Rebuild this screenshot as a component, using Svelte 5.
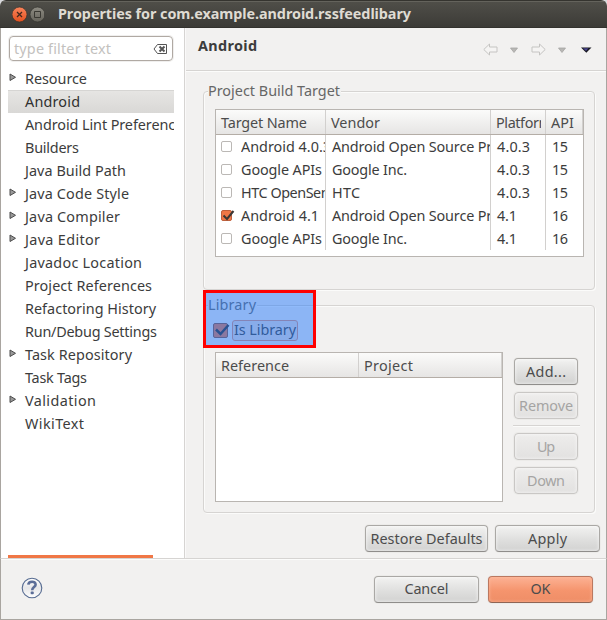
<script>
  const tree = [
    { label: 'Resource', width: 62, branch: true },
    { label: 'Android', width: 55, selected: true },
    { label: 'Android Lint Preferences', width: 165 },
    { label: 'Builders', width: 54 },
    { label: 'Java Build Path', width: 101 },
    { label: 'Java Code Style', width: 104, branch: true },
    { label: 'Java Compiler', width: 95, branch: true },
    { label: 'Java Editor', width: 75, branch: true },
    { label: 'Javadoc Location', width: 117 },
    { label: 'Project References', width: 127 },
    { label: 'Refactoring History', width: 131 },
    { label: 'Run/Debug Settings', width: 132 },
    { label: 'Task Repository', width: 107, branch: true },
    { label: 'Task Tags', width: 62 },
    { label: 'Validation', width: 71, branch: true },
    { label: 'WikiText', width: 59 }
  ];

  const google = ['Google APIs', 81, 'Google Inc.', 75];
  const aosp = ['Android Open Source Project', 192];
  const targets = [
    { name: 'Android 4.0.3', nw: 90, vendor: aosp[0], vw: aosp[1], platform: '4.0.3', pw: 33, api: '15' },
    { name: google[0], nw: google[1], vendor: google[2], vw: google[3], platform: '4.0.3', pw: 33, api: '15' },
    { name: 'HTC OpenSense SDK', nw: 132, vendor: 'HTC', vw: 28, platform: '4.0.3', pw: 33, api: '15' },
    { name: 'Android 4.1', nw: 78, vendor: aosp[0], vw: aosp[1], platform: '4.1', pw: 20, api: '16', checked: true },
    { name: google[0], nw: google[1], vendor: google[2], vw: google[3], platform: '4.1', pw: 20, api: '16' }
  ];

  // Tracks a label out or in so that it fills the given width.
  function fit(node, width) {
    const natural = node.getBoundingClientRect().width;
    const gaps = node.textContent.length - 1;
    node.style.letterSpacing = `${(width - natural) / gaps}px`;
    node.style.marginRight = `${-(width - natural) / gaps}px`;
  }
</script>

{#snippet t(label, width)}<span class="t" use:fit={width}>{label}</span>{/snippet}

<div class="window">
  <div class="titlebar">
    <svg width="32" height="18" viewBox="0 0 32 18">
      <defs>
        <linearGradient id="close" x2="0" y2="1"><stop stop-color="#f9855c" /><stop offset="1" stop-color="#e2501f" /></linearGradient>
        <linearGradient id="max" x2="0" y2="1"><stop stop-color="#8d8b82" /><stop offset="1" stop-color="#65635b" /></linearGradient>
      </defs>
      <circle cx="7.5" cy="8.5" r="7.5" fill="url(#close)" stroke="#34332e" stroke-width=".7" />
      <path d="M5 6l5 5M10 6l-5 5" stroke="#43281e" stroke-width="1.3" />
      <circle cx="25.5" cy="8.5" r="7.5" fill="url(#max)" stroke="#34332e" stroke-width=".7" />
      <path d="M22.5 5.5h6v6h-6z" fill="none" stroke="#393832" />
    </svg>
    <h1>{@render t('Properties for com.example.android.rssfeedlibary', 353)}</h1>
  </div>

  <div class="body">
    <aside>
      <div class="filter">
        {@render t('type filter text', 97)}
        <svg width="15" height="12" viewBox="0 0 15 12">
          <path d="M4.5 1.5h9v9h-9L1 6z" fill="#fff" stroke="#555" />
          <path d="M6.500 3.500l5 5M11.500 3.500l-5 5" stroke="#555" stroke-width="2" />
        </svg>
      </div>
      <ul>
        {#each tree as item}
          <li class:selected={item.selected}>
            <span class="twisty">
              {#if item.branch}
                <svg width="8" height="9" viewBox="0 0 8 9"><path d="M1 1L6.500 4.300 1 7.500z" fill="#999" stroke="#4c4c4c" /></svg>
              {/if}
            </span>
            {@render t(item.label, item.width)}
          </li>
        {/each}
      </ul>
      <div class="scroll"></div>
    </aside>

    <main>
      <header>
        <h2>{@render t('Android', 59)}</h2>
        <svg width="110" height="14" viewBox="0 0 110 14">
          <g fill="#f5f4f3" stroke="#c5c4c2">
            <path d="M.8 6.500L6.500 1v3h7.500v5H6.500v3z" />
            <path d="M62.200 6.500L56.500 1v3H49v5h7.500v3z" />
          </g>
          <path d="M27.500 5h7L31 9.500z" fill="#b8b7b5" stroke="#a5a4a2" stroke-width=".8" />
          <path d="M75.500 5h7L79 9.500z" fill="#b8b7b5" stroke="#a5a4a2" stroke-width=".8" />
          <path d="M98 4.500h10.500l-5.200 5.300z" fill="#17171f" />
          <path d="M100 5.300h5.500L103 8z" fill="#4a4692" />
        </svg>
      </header>

      <div class="page">
        <section class="group targets">
          <div class="legend">{@render t('Project Build Target', 132)}</div>
          <div class="table">
            <div class="row head">
              <div>{@render t('Target Name', 86)}</div>
              <div>{@render t('Vendor', 49)}</div>
              <div><span class="clip">{@render t('Platform', 56)}</span></div>
              <div>{@render t('API', 23)}</div>
            </div>
            {#each targets as row}
              <div class="row">
                <div class="name">
                  <span class="box" class:checked={row.checked}>
                    {#if row.checked}
                      <svg width="14" height="12" viewBox="0 0 14 12"><path d="M2.500 5.500l3.500 3.500L12.500 1" fill="none" stroke="#3b3835" stroke-width="2" /></svg>
                    {/if}
                  </span>
                  <span class="clip">{@render t(row.name, row.nw)}</span>
                </div>
                <div>{@render t(row.vendor, row.vw)}</div>
                <div>{@render t(row.platform, row.pw)}</div>
                <div>{@render t(row.api, 16)}</div>
              </div>
            {/each}
          </div>
        </section>

        <section class="group library">
          <div class="legend">{@render t('Library', 48)}</div>
          <div class="check">
            <span class="box checked big">
              <svg width="18" height="15" viewBox="0 0 18 15"><path d="M3 6.500l4.500 4.500L15.500 2" fill="none" stroke="#2e2b2b" stroke-width="2.500" /></svg>
            </span>
            <span class="focus">{@render t('Is Library', 62)}</span>
          </div>
          <div class="split">
            <div class="table refs">
              <div class="row head">
                <div>{@render t('Reference', 68)}</div>
                <div>{@render t('Project', 49)}</div>
              </div>
            </div>
            <div class="actions">
              <button>{@render t('Add...', 40)}</button>
              <button disabled>{@render t('Remove', 54)}</button>
              <hr />
              <button disabled>{@render t('Up', 18)}</button>
              <button disabled>{@render t('Down', 38)}</button>
            </div>
          </div>
          <div class="highlight"></div>
        </section>

        <div class="apply">
          <button class="restore">{@render t('Restore Defaults', 112)}</button>
          <button>{@render t('Apply', 39)}</button>
        </div>
      </div>
    </main>
  </div>

  <footer>
    <svg width="22" height="22" viewBox="0 0 22 22">
      <defs><linearGradient id="help" x2="0" y2="1"><stop stop-color="#fff" /><stop offset=".5" stop-color="#e6e6e8" /><stop offset="1" stop-color="#fff" /></linearGradient></defs>
      <circle cx="11" cy="11" r="9.800" fill="url(#help)" stroke="#566b91" stroke-width="1.100" />
      <path d="M7.300 7.700C7.600 3.700 14.700 3.700 14.600 7.600C14.500 10.200 11.200 10 11.200 13.300" fill="none" stroke="#5b6d98" stroke-width="2.600" />
      <rect x="9.600" y="14.500" width="3.200" height="2.800" rx="1" fill="#5b6d98" />
    </svg>
    <div class="buttons">
      <button>{@render t('Cancel', 44)}</button>
      <button class="ok">{@render t('OK', 20)}</button>
    </div>
  </footer>
</div>

<style>
  :global(body) { background: #d9dadd; }
  * { box-sizing: border-box; }
  h1, h2, ul { margin: 0; padding: 0; }
  .t { white-space: nowrap; display: inline-block; }
  svg { display: block; flex: none; }

  .window {
    width: 607px; height: 620px; display: flex; flex-direction: column;
    font: 14.4px/22px 'Noto Sans', sans-serif; color: #3c3c3c; background: #f2f1f0;
    border-radius: 6px 6px 0 0; overflow: hidden;
  }
  .titlebar {
    height: 28px; flex: none; display: flex; align-items: center; padding: 1px 0 0 12px; gap: 14px;
    background: linear-gradient(#504f49, #3c3b37); border-top: 1px solid #35342f; box-shadow: inset 0 1px #64635c;
    border-bottom: 1px solid #33322e;
  }
  .titlebar h1 { font-size: 14.4px; line-height: 22px; font-weight: 700; color: #dfdbd2; margin-top: -1px; }

  .body { display: flex; height: 530px; flex: none; border: solid #a9a5a0; border-width: 0 1px; }
  aside {
    width: 184px; flex: none; background: #fff; border-right: 1px solid #d6d4d2;
    padding: 7px 10px 0 7px; display: flex; flex-direction: column;
  }
  .filter {
    height: 25px; margin: 1px 1px 0; padding: 0 4px; border: 1px solid #b0a9a3; border-radius: 4px;
    display: flex; align-items: center; justify-content: space-between; color: #c3c1be; box-shadow: 0 0 0 1px #f0efee;
  }
  ul { list-style: none; margin-top: 6px; }
  li { height: 23px; display: flex; align-items: center; overflow: hidden; }
  li.selected { background: linear-gradient(#e6e5e3, #d9d8d6); border-top: 1px solid #d6d5d3; color: #303030; }
  .twisty { width: 17px; padding-left: 1px; flex: none; margin-top: -2px; }
  .scroll { margin-top: auto; width: 145px; height: 3px; background: #f07746; flex: none; }

  main { flex: 1; min-width: 0; display: flex; flex-direction: column; border-left: 1px solid #faf9f9; }
  header {
    height: 43px; flex: none; display: flex; justify-content: space-between; align-items: center;
    padding: 0 13px 7px 12px; border-bottom: 1px solid #d6d4d2; box-shadow: 0 1px #fcfcfb;
  }
  header svg { margin-top: 8px; }
  header h2 { font-size: 14.4px; line-height: 22px; font-weight: 700; }
  .page { padding: 20px 6px 0 17px; display: flex; flex-direction: column; }
  .group {
    position: relative; width: 392px; border: 1px solid #d6d4d2; border-radius: 4px;
    box-shadow: inset 1px 1px #fbfbfa, 1px 1px #fbfbfa; padding-left: 11px;
  }
  .legend {
    width: fit-content; background: #f2f1f0; height: 22px; margin: -12px 0 0 -7px; color: #666; padding-right: 1px;
    position: relative;
  }
  .targets { height: 199px; }
  .library { height: 208px; margin-top: 15px; }

  .table { width: 369px; height: 148px; background: #fff; border: 1px solid #b9b5b1; margin-top: 7px; }
  .row { display: grid; grid-template-columns: 110px 165px 55px 37px; height: 23px; }
  .row > div { overflow: hidden; padding-left: 6px; display: flex; align-items: center; border-right: 1px solid #d2d0ce; }
  .row > div:last-child { border-right: 0; }
  .row > .name { padding-left: 5px; }
  .head { height: 25px; background: linear-gradient(#fbfbfa, #e6e5e4); border-bottom: 1px solid #b4ada6; color: #4c4c4c; }
  .row.head > div { padding: 2px 4px 0 5px; }
  .head > div:last-child { border-right: 1px solid #d2d0ce; }
  .clip { overflow: hidden; flex: 1; height: 22px; }
  .box { width: 11px; height: 11px; border: 1px solid #bbb8b5; border-radius: 2px; flex: none; margin-right: 9px; background: #fff; margin-top: -1px; }
  .box svg { margin: -1px 0 0 -1px; }
  .box.checked { background: #f07746; border-color: #be603d; }

  .check { display: flex; align-items: center; height: 22px; margin: 3px 0 0 -2px; }
  .box.big { width: 15px; height: 15px; margin-right: 4px; margin-top: 1px; border-color: #8c4f38; }
  .focus { height: 21px; border: 1px solid #e28f72; border-radius: 3px; padding: 0 1px; background: #eadfda; width: 66px; display: flex; align-items: center; }
  .highlight { position: absolute; left: -1px; top: -16px; width: 113px; height: 58px; border: 3px solid red; background: rgba(38, 121, 250, .5); background-clip: padding-box; }

  .split { display: flex; gap: 10px; align-items: flex-start; margin-top: 11px; }
  .refs { width: 288px; height: 150px; margin-top: 0; flex: none; }
  .refs .row { grid-template-columns: 143px 143px; }
  .actions { display: flex; flex-direction: column; width: 67px; gap: 7px; padding: 6px 1px 0 1px; }
  .actions hr { border: 0; border-top: 1px solid #d6d4d2; border-bottom: 1px solid #fbfbfa; margin: -1px -1px -1px; height: 2px; width: 67px; }
  .actions button { width: 64px; }

  button {
    font: inherit; color: #4c4c4c; width: 105px; height: 27px; flex: none; padding: 0;
    display: flex; align-items: center; justify-content: center;
    border: 1px solid #aaa8a5; border-bottom-color: #8f8d8b; border-radius: 4px;
    background: linear-gradient(#f2f2f1, #dfdfde 55%, #d2d2d1);
    box-shadow: inset 0 0 3px 1px rgba(255, 255, 255, .45), 0 0 0 1px #ecebe9;
  }
  button:disabled { color: #a5a4a3; border-color: #c9c7c5; background: linear-gradient(#eeedec, #e2e1e0); }
  .apply { display: flex; gap: 7px; justify-content: flex-end; margin-top: 12px; }
  .apply .restore { width: 123px; }

  footer {
    flex: 1; display: flex; justify-content: space-between; align-items: center; padding: 0 13px 1px 20px;
    border: 1px solid #a9a5a0; border-top-color: #d6d4d2; box-shadow: inset 0 1px #fcfcfb;
  }
  footer > svg { margin-top: -1px; }
  .buttons { display: flex; gap: 9px; padding-top: 1px; }
  .buttons .ok { border-color: #bb7860; border-bottom-color: #8f6555; background: linear-gradient(#fcb294, #f5946d 55%, #ee8e67); box-shadow: inset 0 0 3px 1px rgba(255, 190, 160, .5), 0 0 0 1px #ecebe9; }
</style>
